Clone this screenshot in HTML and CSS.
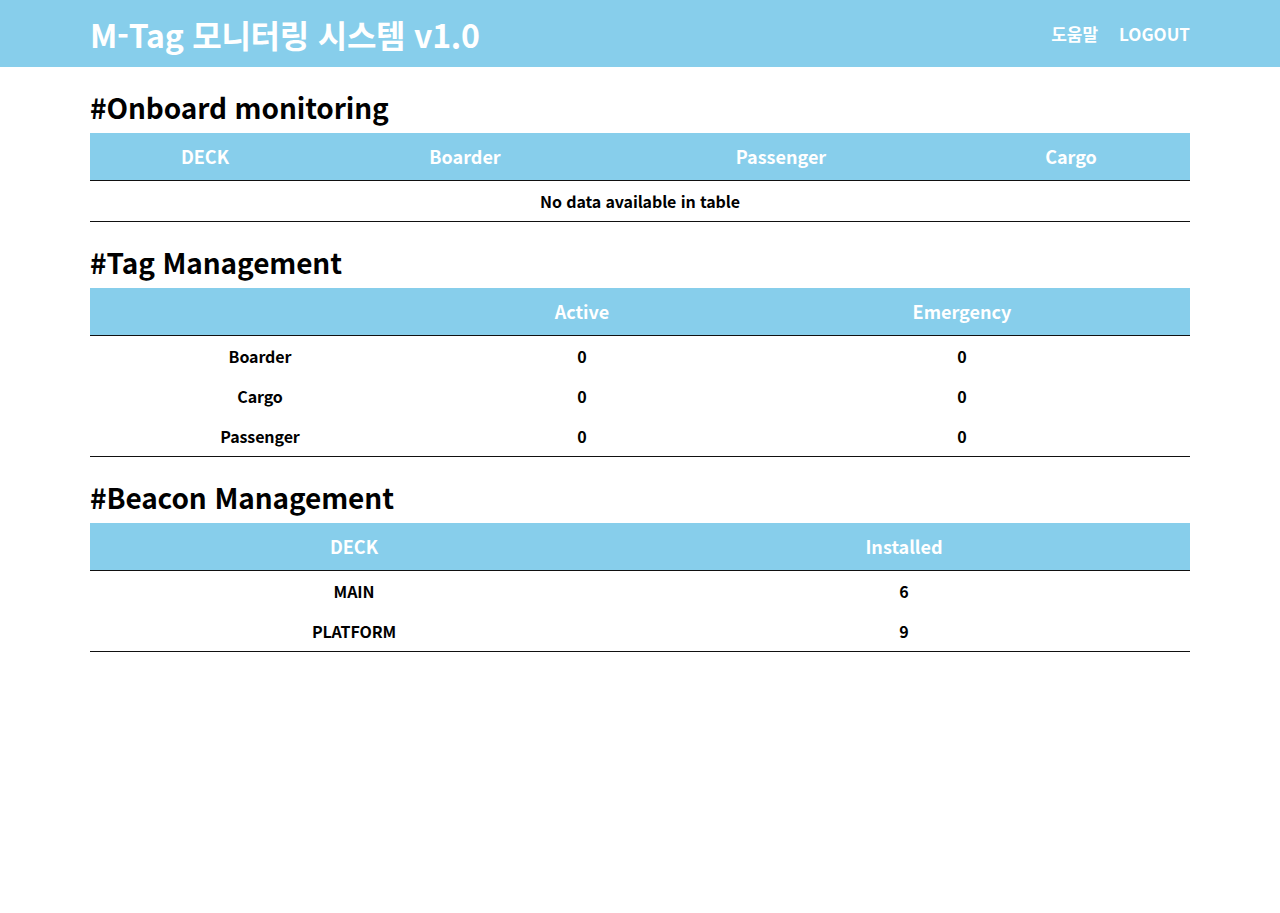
FILE: index.html
```html
<!DOCTYPE html>
<html lang="ko">
<head>
<meta charset="utf-8">
<title>M-Tag 모니터링 시스템 v1.0</title>
<link rel="stylesheet" href="styles.css">
</head>
<body>
<header class="topbar">
  <div class="container topbar-inner">
    <h1 class="brand">M-Tag 모니터링 시스템 v1.0</h1>
    <nav class="nav">
      <a href="#" class="nav-link">도움말</a>
      <a href="#" class="nav-link">LOGOUT</a>
    </nav>
  </div>
</header>
<main class="container">
  <section class="section">
    <h2 class="section-title">#Onboard monitoring</h2>
    <table class="data-table">
      <colgroup>
        <col class="w230"><col class="w290"><col class="w342"><col>
      </colgroup>
      <thead>
        <tr><th>DECK</th><th>Boarder</th><th>Passenger</th><th>Cargo</th></tr>
      </thead>
      <tbody>
        <tr><td colspan="4">No data available in table</td></tr>
      </tbody>
    </table>
  </section>
  <section class="section">
    <h2 class="section-title">#Tag Management</h2>
    <table class="data-table">
      <colgroup>
        <col class="w340"><col class="w304"><col>
      </colgroup>
      <thead>
        <tr><th></th><th>Active</th><th>Emergency</th></tr>
      </thead>
      <tbody>
        <tr><td>Boarder</td><td>0</td><td>0</td></tr>
        <tr><td>Cargo</td><td>0</td><td>0</td></tr>
        <tr><td>Passenger</td><td>0</td><td>0</td></tr>
      </tbody>
    </table>
  </section>
  <section class="section">
    <h2 class="section-title">#Beacon Management</h2>
    <table class="data-table">
      <colgroup>
        <col class="w528"><col>
      </colgroup>
      <thead>
        <tr><th>DECK</th><th>Installed</th></tr>
      </thead>
      <tbody>
        <tr><td>MAIN</td><td>6</td></tr>
        <tr><td>PLATFORM</td><td>9</td></tr>
      </tbody>
    </table>
  </section>
</main>
</body>
</html>
```
FILE: styles.css
```css
* { box-sizing: border-box; }
html, body {
  margin: 0;
  padding: 0;
  background: #ffffff;
  color: #000000;
  font-family: "Noto Sans CJK KR", "Noto Sans", sans-serif;
  font-weight: 700;
}
.container {
  width: 1100px;
  margin: 0 auto;
}
.topbar {
  background: #87ceeb;
  height: 67px;
}
.topbar-inner {
  height: 67px;
  display: flex;
  align-items: center;
  justify-content: space-between;
}
.brand {
  margin: 0;
  font-size: 32px;
  line-height: 40px;
  letter-spacing: -0.25px;
  color: #ffffff;
  font-weight: 700;
}
.nav {
  display: flex;
  gap: 21px;
}
.nav-link {
  color: #ffffff;
  text-decoration: none;
  font-size: 17px;
  line-height: 24px;
}
.section-title {
  margin: 20px 0 6px;
  font-size: 28px;
  line-height: 40px;
  letter-spacing: -0.1px;
  font-weight: 700;
}
.data-table {
  width: 100%;
  border-collapse: collapse;
  table-layout: fixed;
}
.w230 { width: 230px; }
.w290 { width: 290px; }
.w342 { width: 342px; }
.w340 { width: 340px; }
.w304 { width: 304px; }
.w528 { width: 528px; }
.data-table th {
  background: #87ceeb;
  color: #ffffff;
  font-size: 18px;
  line-height: 27px;
  padding: 10px 18px;
  text-align: center;
  border-bottom: 1px solid #111111;
}
.data-table td {
  font-size: 16px;
  line-height: 24px;
  padding: 8px 10px;
  letter-spacing: -0.1px;
  text-align: center;
}
.data-table tbody tr:last-child td {
  border-bottom: 1px solid #111111;
}
```
